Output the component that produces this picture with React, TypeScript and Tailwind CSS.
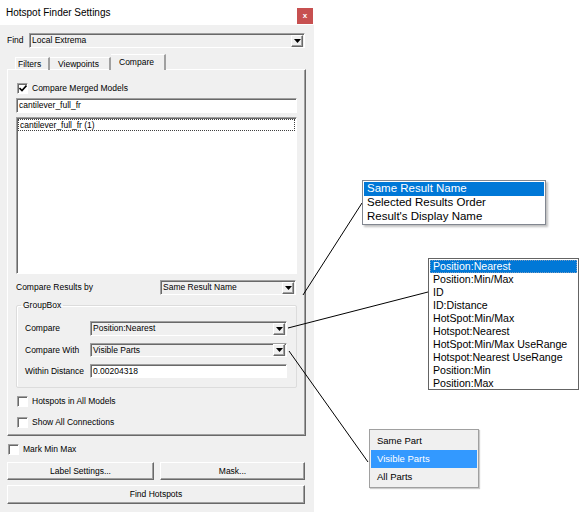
import React from "react";

const sunken =
  "border border-t-[#a0a0a0] border-l-[#a0a0a0] border-r-white border-b-white shadow-[inset_1px_1px_0_#696969]";
const raised =
  "border border-t-white border-l-white border-r-[#696969] border-b-[#696969] shadow-[inset_-1px_-1px_0_#a0a0a0]";

function Arrow() {
  return (
    <div className={`w-[12px] h-[12px] bg-[#f0f0f0] flex items-center justify-center ${raised}`}>
      <svg width="7" height="4" viewBox="0 0 7 4">
        <polygon points="0,0 7,0 3.5,4" fill="#000" />
      </svg>
    </div>
  );
}

function Combo({ value, className }: { value: string; className: string }) {
  return (
    <div className={`flex items-center justify-between bg-[#f0f0f0] pl-[2px] pr-px ${sunken} ${className}`}>
      <span className="leading-none">{value}</span>
      <Arrow />
    </div>
  );
}

function Check({ checked, label, className = "" }: { checked?: boolean; label: string; className?: string }) {
  return (
    <div className={`flex items-center h-[11px] ${className}`}>
      <div className={`w-[11px] h-[11px] bg-white flex items-center justify-center ${sunken}`}>
        {checked && (
          <svg width="8" height="7" viewBox="0 0 8 7">
            <polyline points="0.5,3 3,5.5 7.5,0.5" fill="none" stroke="#000" strokeWidth="1.6" />
          </svg>
        )}
      </div>
      <span className="ml-[4px] leading-none">{label}</span>
    </div>
  );
}

function Button({ label, className }: { label: string; className: string }) {
  return (
    <div className={`flex items-center justify-center bg-[#f0f0f0] ${raised} ${className}`}>
      <span className="leading-none">{label}</span>
    </div>
  );
}

export default function App() {
  const positions = [
    "Position:Nearest",
    "Position:Min/Max",
    "ID",
    "ID:Distance",
    "HotSpot:Min/Max",
    "Hotspot:Nearest",
    "HotSpot:Min/Max UseRange",
    "Hotspot:Nearest UseRange",
    "Position:Min",
    "Position:Max",
  ];

  return (
    <div className="relative w-[582px] h-[512px] bg-white overflow-hidden text-black font-['Liberation_Sans',Arial,sans-serif]">
      {/* Dialog */}
      <div className="w-[314px] h-full bg-[#f0f0f0] flex flex-col text-[8.5px]">
        <div className="h-[25px] bg-white flex items-center justify-between pl-[6px] pr-[1px]">
          <span className="text-[10px]">Hotspot Finder Settings</span>
          <div className="mt-[6px] w-[16px] h-[16px] bg-[#c75050] flex items-center justify-center text-white text-[8px] font-bold leading-none">
            x
          </div>
        </div>

        <div className="mt-[8px] flex items-center h-[15px]">
          <span className="ml-[7px] w-[22px] leading-none">Find</span>
          <Combo value="Local Extrema" className="w-[276px] h-[15px]" />
        </div>

        {/* Tabs */}
        <div className="mt-[6px] ml-[15px] flex items-end h-[16px] relative z-10 -mb-px">
          <div className="h-[13px] pl-[2px] flex items-center border-l border-t border-white border-r-2 border-r-[#a0a0a0] w-[35px]">
            <span className="leading-none">Filters</span>
          </div>
          <div className="h-[13px] pl-[8px] flex items-center border-t border-white border-r-2 border-r-[#a0a0a0] w-[61px]">
            <span className="leading-none">Viewpoints</span>
          </div>
          <div className="h-[16px] pl-[8px] flex items-center bg-[#f0f0f0] border-t border-white border-r-2 border-r-[#a0a0a0] w-[55px]">
            <span className="leading-none">Compare</span>
          </div>
        </div>

        {/* Tab panel */}
        <div className="ml-[7px] w-[299px] h-[367px] flex flex-col border border-t-white border-l-white border-r-[#696969] border-b-[#696969] shadow-[inset_-1px_-1px_0_#a0a0a0]">
          <Check checked label="Compare Merged Models" className="mt-[13px] ml-[9px]" />
          <div className={`mt-[4px] ml-[8px] w-[281px] h-[15px] bg-white flex items-center pl-[2px] ${sunken}`}>
            <span className="leading-none">cantilever_full_fr</span>
          </div>
          <div className={`mt-[4px] ml-[8px] w-[281px] h-[157px] bg-white p-px ${sunken}`}>
            <div className="h-[12px] flex items-center pl-px border border-dotted border-[#404040]">
              <span className="leading-none">cantilever_full_fr (1)</span>
            </div>
          </div>
          <div className="mt-[6px] ml-[8px] flex items-center justify-between w-[280px] h-[15px]">
            <span className="leading-none">Compare Results by</span>
            <Combo value="Same Result Name" className="w-[136px] h-[15px]" />
          </div>

          <fieldset className="mt-[5px] ml-[8px] w-[281px] border border-[#dcdcdc] rounded-[2px] pl-[8px] pb-[9px] shadow-[inset_1px_1px_0_#fff]">
            <legend className="ml-[-4px] px-[2px] leading-[10px]">GroupBox</legend>
            <div className="mt-[11px] flex items-center h-[15px]">
              <span className="w-[65px] leading-none">Compare</span>
              <Combo value="Position:Nearest" className="w-[197px] h-[15px]" />
            </div>
            <div className="mt-[7px] flex items-center h-[14px]">
              <span className="w-[65px] leading-none">Compare With</span>
              <Combo value="Visible Parts" className="w-[197px] h-[14px]" />
            </div>
            <div className="mt-[7px] flex items-center h-[14px]">
              <span className="w-[65px] leading-none">Within Distance</span>
              <div className={`w-[197px] h-[14px] bg-white flex items-center pl-[2px] ${sunken}`}>
                <span className="leading-none">0.00204318</span>
              </div>
            </div>
          </fieldset>

          <Check label="Hotspots in All Models" className="mt-[8px] ml-[9px]" />
          <Check label="Show All Connections" className="mt-[10px] ml-[9px]" />
        </div>

        <Check label="Mark Min Max" className="mt-[8px] ml-[8px]" />
        <div className="mt-[7px] ml-[7px] flex gap-[6px]">
          <Button label="Label Settings..." className="w-[147px] h-[18px]" />
          <Button label="Mask..." className="w-[145px] h-[18px]" />
        </div>
        <Button label="Find Hotspots" className="mt-[5px] ml-[7px] w-[298px] h-[19px]" />
      </div>

      {/* Connector lines */}
      <svg className="absolute inset-0 pointer-events-none" width="582" height="512">
        <line x1="303" y1="295" x2="362" y2="203" stroke="#000" strokeWidth="1" />
        <line x1="288" y1="328" x2="428" y2="292" stroke="#000" strokeWidth="1" />
        <line x1="289" y1="351" x2="368" y2="462" stroke="#000" strokeWidth="1" />
      </svg>

      {/* Popup: Compare Results by */}
      <div className="absolute left-[362px] top-[180px] w-[184px] h-[45px] bg-white border border-[#828790] shadow-[2px_2px_2px_rgba(0,0,0,0.25)] text-[11.5px] pt-px px-px">
        <div className="h-[14px] bg-[#0078d7] text-white flex items-center pl-[3px] leading-none">Same Result Name</div>
        <div className="h-[14px] flex items-center pl-[3px] leading-none">Selected Results Order</div>
        <div className="h-[14px] flex items-center pl-[3px] leading-none">Result's Display Name</div>
      </div>

      {/* Popup: Compare */}
      <div className="absolute left-[428px] top-[258px] w-[151px] h-[132px] bg-white border border-[#646464] text-[10.6px] pt-px px-px">
        {positions.map((p, i) => (
          <div
            key={p}
            className={`h-[13px] flex items-center pl-[3px] leading-none ${
              i === 0 ? "bg-[#0078d7] text-white outline-1 outline-dotted outline-[#7a9cc0] -outline-offset-1" : ""
            }`}
          >
            {p}
          </div>
        ))}
      </div>

      {/* Popup: Compare With */}
      <div className="absolute left-[369px] top-[429px] w-[110px] h-[59px] bg-[#f0f0f0] border border-[#a0a0a0] shadow-[1px_1px_1px_rgba(0,0,0,0.2)] text-[9.5px] pt-[2px] px-px">
        <div className="h-[18px] flex items-center pl-[6px] leading-none">Same Part</div>
        <div className="h-[18px] flex items-center pl-[6px] leading-none bg-[#3399ff] text-white">Visible Parts</div>
        <div className="h-[18px] flex items-center pl-[6px] leading-none">All Parts</div>
      </div>
    </div>
  );
}
